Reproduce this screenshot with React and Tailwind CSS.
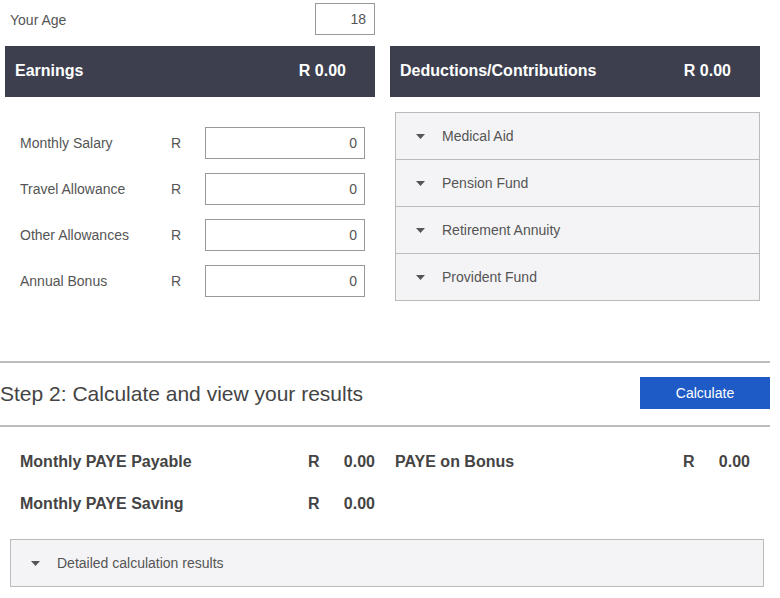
import React from "react";

const Caret = () => (
  <svg width="9" height="5" viewBox="0 0 9 5" className="shrink-0">
    <path d="M0 0 L9 0 L4.5 5 Z" fill="#555" />
  </svg>
);

const earnings = ["Monthly Salary", "Travel Allowance", "Other Allowances", "Annual Bonus"];
const deductions = ["Medical Aid", "Pension Fund", "Retirement Annuity", "Provident Fund"];

const ResultRow = ({ label, value }) => (
  <div className="flex items-center">
    <span className="flex-1">{label}</span>
    <span className="w-[27px]">R</span>
    <span className="w-[40px] text-right">{value}</span>
  </div>
);

export default function App() {
  return (
    <div
      className="w-[780px] h-[598px] bg-white text-[#555] overflow-hidden"
      style={{ fontFamily: '"Liberation Sans", Arial, sans-serif' }}
    >
      {/* Age */}
      <div className="flex w-[375px] pt-[3px] h-[46px] items-start">
        <span className="pl-[10px] text-[14px] flex-1 pt-[7px]">Your Age</span>
        <div className="w-[60px] h-[32px] border border-[#999] flex items-center justify-end pr-[8px] text-[14px]">
          18
        </div>
      </div>

      {/* Step 1 columns */}
      <div className="flex gap-[15px] pl-[5px]">
        <div className="w-[370px]">
          <div className="h-[51px] bg-[#3d3f4e] text-white font-bold text-[16px] flex items-center pl-[10px] pr-[29px] pb-[1px]">
            <span className="flex-1">Earnings</span>
            <span>R 0.00</span>
          </div>
          <div className="flex flex-col gap-[14px] pt-[30px]">
            {earnings.map((label) => (
              <div key={label} className="flex items-center text-[14px]">
                <span className="w-[166px] pl-[15px]">{label}</span>
                <span className="w-[34px]">R</span>
                <div className="w-[160px] h-[32px] border border-[#999] flex items-center justify-end pr-[7px]">
                  0
                </div>
              </div>
            ))}
          </div>
        </div>

        <div className="w-[370px]">
          <div className="h-[51px] bg-[#3d3f4e] text-white font-bold text-[16px] flex items-center pl-[10px] pr-[29px] pb-[1px]">
            <span className="flex-1">Deductions/Contributions</span>
            <span>R 0.00</span>
          </div>
          <div className="ml-[5px] mt-[15px] border-x border-b border-[#bbb] bg-[#f4f4f6]">
            {deductions.map((label) => (
              <div
                key={label}
                className="h-[47px] flex items-center pl-[20px] gap-[17px] text-[14px] border-t border-[#bbb]"
              >
                <Caret />
                <span>{label}</span>
              </div>
            ))}
          </div>
        </div>
      </div>

      {/* Step 2 */}
      <div className="w-[770px] mt-[60px] border-t-2 border-b-2 border-[#bdbdbd] h-[66px] flex items-center">
        <h2 className="flex-1 text-[21px] text-[#444]">Step 2: Calculate and view your results</h2>
        <button className="w-[130px] h-[32px] bg-[#1f5bc6] text-white text-[14px] mb-[2px]">
          Calculate
        </button>
      </div>

      {/* Results */}
      <div className="flex gap-[20px] ml-[20px] pt-[23px] font-bold text-[16px] text-[#444]">
        <div className="flex flex-col gap-[18px] w-[355px]">
          <ResultRow label="Monthly PAYE Payable" value="0.00" />
          <ResultRow label="Monthly PAYE Saving" value="0.00" />
        </div>
        <div className="flex flex-col gap-[18px] w-[355px]">
          <ResultRow label="PAYE on Bonus" value="0.00" />
        </div>
      </div>

      <div className="ml-[10px] mt-[23px] w-[754px] h-[48px] border border-[#bbb] bg-[#f4f4f6] flex items-center pl-[20px] gap-[17px] text-[14px]">
        <Caret />
        <span>Detailed calculation results</span>
      </div>
    </div>
  );
}
